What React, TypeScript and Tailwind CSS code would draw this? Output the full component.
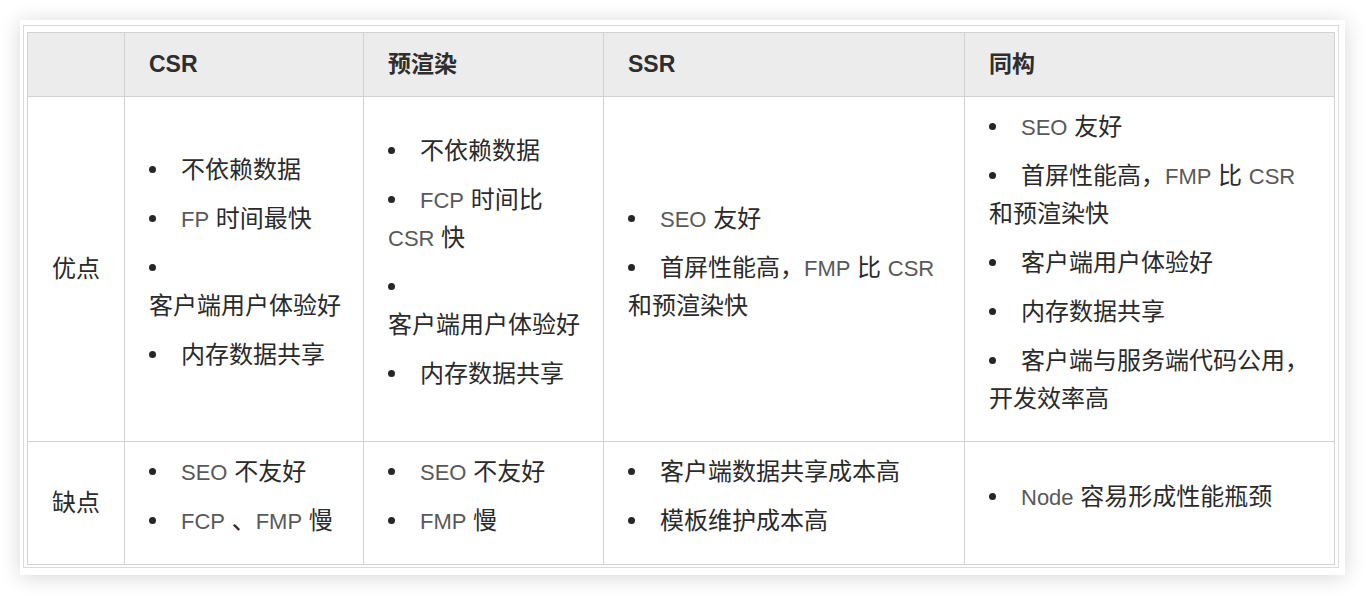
import React from "react";

const L = ({ children }: { children: React.ReactNode }) => (
  <span className="font-['Liberation_Sans',sans-serif] text-[22px] text-[#595959]">{children}</span>
);

type Item = React.ReactNode[];

const Dot = () => (
  <span className="inline-flex w-[32px] items-center align-middle relative top-[-2px]">
    <span className="inline-block w-[7px] h-[7px] rounded-full bg-[#262626]" />
  </span>
);

const List = ({ items }: { items: Item[] }) => (
  <div className="flex flex-col gap-[11px] mb-[13px]">
    {items.map((lines, i) => (
      <div key={i}>
        {lines.map((line, j) => (
          <div key={j} className="h-[38px] leading-[38px] whitespace-nowrap">
            {j === 0 && <Dot />}
            {line}
          </div>
        ))}
      </div>
    ))}
  </div>
);

const cell = "border-r border-b border-[#d2d2d2] px-[24px] flex flex-col justify-center";
const head = cell + " bg-[#ececec] font-bold text-[23px] text-[#2e2e2e]";

export default function App() {
  return (
    <div className="w-[1366px] h-[596px] bg-white p-[20px] font-['Liberation_Sans','Noto_Sans_CJK_SC',sans-serif] text-[24px] text-[#2a2a2a]">
      <div className="w-[1325px] h-[555px] bg-white shadow-[0_2px_20px_rgba(0,0,0,0.16)] pl-[3px] pt-[5px]">
        <div className="w-[1316px] h-[543px] border border-[#dadada] pl-[3px] pt-[6px]">
          <div className="grid grid-cols-[97px_239px_240px_361px_370px] grid-rows-[64px_345px_123px] border-l border-t border-[#d2d2d2] w-[1308px]">
            <div className={head}></div>
            <div className={head}>CSR</div>
            <div className={head}>预渲染</div>
            <div className={head}>SSR</div>
            <div className={head}>同构</div>

            <div className={cell}>优点</div>
            <div className={cell}>
              <List
                items={[
                  ["不依赖数据"],
                  [<><L>FP</L> 时间最快</>],
                  ["", "客户端用户体验好"],
                  ["内存数据共享"],
                ]}
              />
            </div>
            <div className={cell}>
              <List
                items={[
                  ["不依赖数据"],
                  [<><L>FCP</L> 时间比</>, <><L>CSR</L> 快</>],
                  ["", "客户端用户体验好"],
                  ["内存数据共享"],
                ]}
              />
            </div>
            <div className={cell}>
              <List
                items={[
                  [<><L>SEO</L> 友好</>],
                  [<>首屏性能高，<L>FMP</L> 比 <L>CSR</L></>, "和预渲染快"],
                ]}
              />
            </div>
            <div className={cell}>
              <List
                items={[
                  [<><L>SEO</L> 友好</>],
                  [<>首屏性能高，<L>FMP</L> 比 <L>CSR</L></>, "和预渲染快"],
                  ["客户端用户体验好"],
                  ["内存数据共享"],
                  ["客户端与服务端代码公用，", "开发效率高"],
                ]}
              />
            </div>

            <div className={cell}>缺点</div>
            <div className={cell}>
              <List
                items={[
                  [<><L>SEO</L> 不友好</>],
                  [<><L>FCP</L> 、<L>FMP</L> 慢</>],
                ]}
              />
            </div>
            <div className={cell}>
              <List
                items={[
                  [<><L>SEO</L> 不友好</>],
                  [<><L>FMP</L> 慢</>],
                ]}
              />
            </div>
            <div className={cell}>
              <List items={[["客户端数据共享成本高"], ["模板维护成本高"]]} />
            </div>
            <div className={cell}>
              <List items={[[<><L>Node</L> 容易形成性能瓶颈</>]]} />
            </div>
          </div>
        </div>
      </div>
    </div>
  );
}
